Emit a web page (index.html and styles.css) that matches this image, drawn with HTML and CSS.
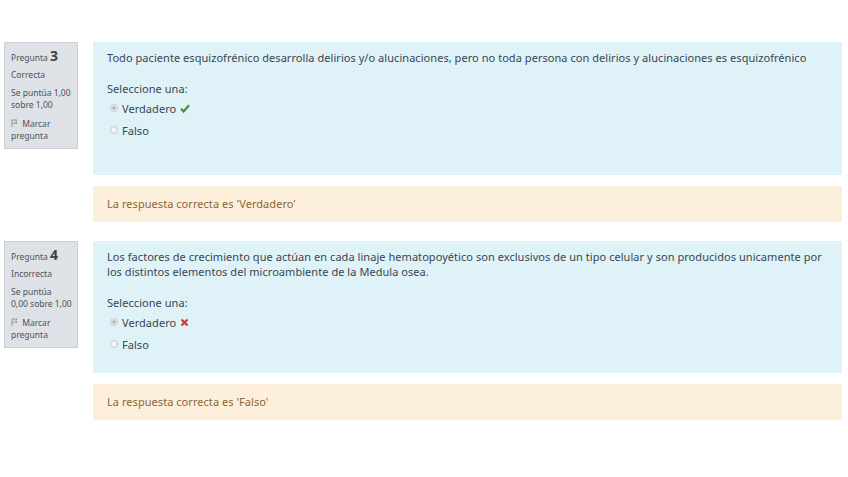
FILE: index.html
```html
<!DOCTYPE html>
<html lang="es">

<head>
  <meta charset="UTF-8">
  <meta name="viewport" content="width=device-width, initial-scale=1.0">
  <title>Revisión del intento</title>
  <link rel="stylesheet" href="styles.css">
</head>

<body>
  <div class="page">

    <div class="que">
      <div class="info">
        <h3 class="qno">Pregunta <span>3</span></h3>
        <div class="state">Correcta</div>
        <div class="grade">Se puntúa 1,00 sobre 1,00</div>
        <div class="flag">
          <svg width="8" height="8" viewBox="0 0 8 8"><path d="M1 0.5v7.5M1 1h5l-1.2 1.6L6 4.2H1" fill="none" stroke="#8a8f96" stroke-width="0.9"/></svg>
          Marcar pregunta
        </div>
      </div>
      <div class="content">
        <div class="formulation first">
          <p class="qtext">Todo paciente esquizofrénico desarrolla delirios y/o alucinaciones, pero no toda persona con delirios y alucinaciones es esquizofrénico</p>
          <div class="prompt">Seleccione una:</div>
          <div class="answer">
            <span class="radio checked"></span>Verdadero
            <svg class="mark" width="10" height="9" viewBox="0 0 10 9"><path d="M1 4.8l2.6 2.7L9 1.3" fill="none" stroke="#3f8f3a" stroke-width="2.2"/></svg>
          </div>
          <div class="answer">
            <span class="radio"></span>Falso
          </div>
        </div>
        <div class="outcome">La respuesta correcta es 'Verdadero'</div>
      </div>
    </div>

    <div class="que">
      <div class="info">
        <h3 class="qno">Pregunta <span>4</span></h3>
        <div class="state">Incorrecta</div>
        <div class="grade">Se puntúa<br><span class="nowrap">0,00 sobre 1,00</span></div>
        <div class="flag">
          <svg width="8" height="8" viewBox="0 0 8 8"><path d="M1 0.5v7.5M1 1h5l-1.2 1.6L6 4.2H1" fill="none" stroke="#8a8f96" stroke-width="0.9"/></svg>
          Marcar pregunta
        </div>
      </div>
      <div class="content">
        <div class="formulation">
          <p class="qtext">Los factores de crecimiento que actúan en cada linaje hematopoyético son exclusivos de un tipo celular y son producidos unicamente por<br>los distintos elementos del microambiente de la Medula osea.</p>
          <div class="prompt">Seleccione una:</div>
          <div class="answer">
            <span class="radio checked"></span>Verdadero
            <svg class="mark" width="9" height="9" viewBox="0 0 9 9"><path d="M1.5 1.5l6 6M7.5 1.5l-6 6" fill="none" stroke="#d9372f" stroke-width="2.2"/></svg>
          </div>
          <div class="answer">
            <span class="radio"></span>Falso
          </div>
        </div>
        <div class="outcome">La respuesta correcta es 'Falso'</div>
      </div>
    </div>

  </div>
</body>

</html>
```

FILE: styles.css
```css
body {
  margin: 0;
  background: #ffffff;
  font-family: "Noto Sans", "Open Sans", sans-serif;
  color: #3b4551;
}

.page {
  padding-top: 42px;
}

.que {
  display: flex;
  align-items: flex-start;
  margin-bottom: 19px;
}

.info {
  box-sizing: border-box;
  width: 74px;
  margin-left: 4px;
  padding: 4px 4px 6px 6px;
  background-color: #dee2e6;
  border: 1px solid #cbd0d6;
  font-size: 8.5px;
  line-height: 12px;
  color: #4b535c;
}

.qno {
  margin: 0 0 2px;
  font-size: 8.5px;
  font-weight: normal;
  line-height: 18px;
}

.qno span {
  font-size: 14px;
  font-weight: bold;
  color: #3b4148;
}

.state {
  margin-bottom: 6px;
}

.grade {
  margin-bottom: 7px;
}

.nowrap {
  white-space: nowrap;
}

.flag svg {
  margin-right: 1px;
}

.content {
  flex: 1;
  margin-left: 15px;
  margin-right: 6px;
}

.formulation {
  box-sizing: border-box;
  padding: 8px 10px 18px 14px;
  background-color: #def2f8;
  font-size: 11px;
  letter-spacing: 0.05px;
}

.formulation.first {
  min-height: 133px;
}

.qtext {
  margin: 0 0 16px;
  line-height: 15px;
}

.prompt {
  line-height: 16px;
}

.answer {
  display: flex;
  align-items: center;
  height: 22px;
  padding-left: 3px;
}

.radio {
  box-sizing: border-box;
  width: 8px;
  height: 8px;
  margin-right: 4px;
  border: 1px solid #c4c8cc;
  border-radius: 50%;
  background: #f4f5f6;
}

.radio.checked {
  background: radial-gradient(circle, #b9bdc2 0 1.6px, #eceef0 2px);
}

.mark {
  margin-left: 4px;
}

.outcome {
  margin-top: 11px;
  padding: 10px 14px;
  background-color: #fcefdc;
  color: #8e662e;
  font-size: 11px;
  letter-spacing: 0.05px;
  line-height: 16px;
}
```
